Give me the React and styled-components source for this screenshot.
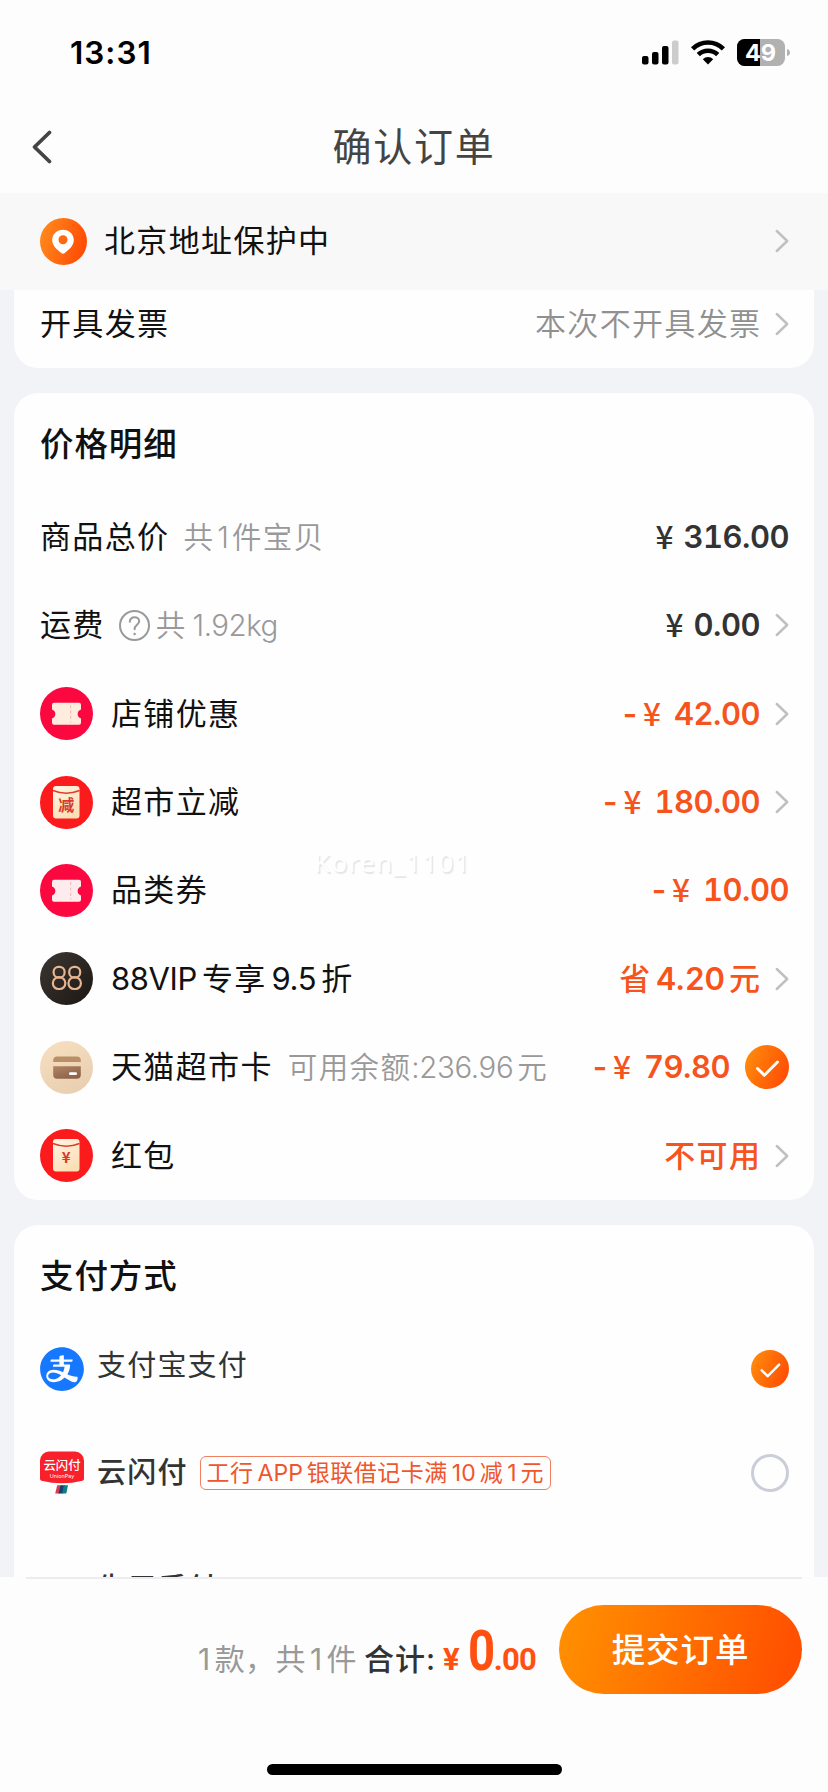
import React from "react";
import styled, { createGlobalStyle } from "styled-components";
import { AiFillAlipayCircle } from "react-icons/ai";

const GlobalStyle = createGlobalStyle`
  * { box-sizing: border-box; }
  body {
    margin: 0;
    background: #fdfdfd;
    font-family: Inter, "Noto Sans CJK SC", sans-serif;
    -webkit-font-smoothing: antialiased;
  }
`;

const Screen = styled.div`
  position: relative;
  width: 828px;
  height: 1792px;
  display: flex;
  flex-direction: column;
  overflow: hidden;
  background: #fdfdfd;
  white-space: nowrap;
`;

/* ---------- header ---------- */

const StatusBar = styled.div`
  height: 105px;
  flex: none;
  display: flex;
  align-items: center;
  justify-content: space-between;
  padding: 0 38px 0 70px;
`;

const Time = styled.span`
  font-size: 31.5px;
  font-weight: 600;
  color: #000;
  letter-spacing: 1px;
`;

const StatusIcons = styled.div`
  display: flex;
  align-items: center;
  gap: 12px;
`;

const NavBar = styled.div`
  height: 88px;
  flex: none;
  display: grid;
  grid-template-columns: 60px 1fr 60px;
  align-items: center;
  padding: 0 20px 4px;
`;

const BackButton = styled.button`
  display: flex;
  padding: 0 0 0 10px;
  border: 0;
  background: none;
`;

const NavTitle = styled.h1`
  margin: 0;
  text-align: center;
  font-size: 39px;
  line-height: 50px;
  font-weight: 400;
  letter-spacing: 1.8px;
  color: #444;
`;

const AddressBar = styled.div`
  height: 97px;
  flex: none;
  display: flex;
  align-items: center;
  gap: 17px;
  padding: 0 39px 1px 40px;
  background: #f8f8f8;
`;

/* ---------- cards ---------- */

const Content = styled.main`
  flex: 1;
  min-height: 0;
  overflow: hidden;
  display: flex;
  flex-direction: column;
  gap: 25px;
  padding: 0 14px;
  background: #f2f3f6;
`;

const Card = styled.section`
  flex: none;
  background: #fefefe;
  border-radius: ${(p) => (p.$joined ? "0 0 24px 24px" : "24px")};
  padding: 0 25px 0 26px;
`;

const CardTitle = styled.h2`
  margin: 0;
  height: 99.5px;
  display: flex;
  align-items: center;
  padding-bottom: 2px;
  font-size: 33.5px;
  font-weight: 500;
  letter-spacing: 0.9px;
  color: #111;
`;

const Row = styled.div`
  height: ${(p) => p.$height || 88.45}px;
  display: flex;
  align-items: center;
  padding-bottom: ${(p) => p.$lift || 0}px;
`;

const Label = styled.span`
  display: inline-flex;
  align-items: center;
  gap: 5px;
  font-size: 31px;
  line-height: 40px;
  letter-spacing: 1.35px;
  color: #111;
  margin-left: ${(p) => p.$left || 0}px;
`;

const Latin = styled.span`
  letter-spacing: ${(p) => p.$spacing || 0}px;
`;

const Note = styled.span`
  display: inline-flex;
  align-items: center;
  gap: ${(p) => p.$gap || 0}px;
  font-size: 29.5px;
  line-height: 40px;
  font-weight: 350;
  letter-spacing: 1.4px;
  color: #999;
  margin-left: ${(p) => p.$left || 0}px;
`;

const Trailing = styled.div`
  margin-left: auto;
  display: flex;
  align-items: center;
  gap: 15px;
`;

const Amount = styled.span`
  display: inline-flex;
  align-items: center;
  font-size: 31px;
  line-height: 40px;
  font-weight: 600;
  font-variant-numeric: tabular-nums;
  color: ${(p) => (p.$accent ? "#f6531d" : "#333")};
`;

const Minus = styled.span`
  margin-right: 3px;
`;

const Yen = styled.span`
  width: ${(p) => (p.$wide ? 31 : 28)}px;
  padding-bottom: 4px;
  font-family: "Noto Sans CJK SC", sans-serif;
  font-size: 31.5px;
  font-weight: 500;
`;

const Status = styled.span`
  display: inline-flex;
  align-items: center;
  gap: 4px;
  font-size: 31px;
  line-height: 40px;
  font-weight: 500;
  letter-spacing: 1.4px;
  margin-right: -1.4px;
  color: #f6531d;
`;

const StatusNumber = styled.span`
  font-weight: 600;
  letter-spacing: 0;
`;

const InvoiceValue = styled.span`
  font-size: 31px;
  line-height: 40px;
  letter-spacing: 1.35px;
  margin-right: -1.4px;
  font-weight: 350;
  color: #909090;
`;

const PayName = styled.span`
  font-size: 29px;
  line-height: 40px;
  letter-spacing: 1.2px;
  font-weight: ${(p) => p.$weight || 400};
  color: #333;
  margin-left: 13px;
  padding-bottom: ${(p) => p.$lift || 0}px;
`;

const PromoTag = styled.span`
  display: inline-flex;
  align-items: center;
  gap: 4px;
  height: 34px;
  margin-left: 12px;
  padding: 0 6px;
  border: 1px solid #f08060;
  border-radius: 6px;
  font-size: 23px;
  line-height: 30px;
  letter-spacing: 0.5px;
  color: #f0562c;
`;

const Radio = styled.span`
  width: 38px;
  height: 38px;
  border: 3px solid #cbced8;
  border-radius: 50%;
`;

const Watermark = styled.span`
  position: absolute;
  left: 314px;
  top: 845px;
  font-family: "Noto Sans", sans-serif;
  font-size: 26px;
  line-height: 34px;
  letter-spacing: 1.3px;
  color: #fff;
  text-shadow: 1.5px 1.5px 1px rgba(0, 0, 0, 0.1);
`;

/* ---------- footer ---------- */

const Footer = styled.footer`
  height: 215px;
  flex: none;
  display: flex;
  flex-direction: column;
  align-items: center;
  padding: 0 26px 17px;
  background: #fdfdfd;
`;

const FooterLine = styled.div`
  width: 100%;
  height: 2px;
  background: #ededef;
`;

const Summary = styled.div`
  width: 100%;
  display: flex;
  align-items: flex-start;
  justify-content: flex-end;
  padding-top: 26px;
`;

const Totals = styled.div`
  height: 89px;
  display: flex;
  align-items: baseline;
  padding-top: 16px;
  font-size: 30px;
  line-height: 60px;
`;

const Count = styled.span`
  display: inline-flex;
  align-items: baseline;
  gap: 4px;
  color: #999;
  letter-spacing: 0.4px;
  margin-right: 7px;
`;

const TotalLabel = styled.span`
  color: #333;
  font-weight: 500;
  letter-spacing: 1px;
  margin-right: 7px;
`;

const Price = styled.span`
  display: inline-flex;
  align-items: baseline;
  font-family: Roboto, sans-serif;
  font-weight: 700;
  color: #ff5011;
  margin-right: 23px;
`;

const PriceSmall = styled.span`
  font-size: 31px;
  letter-spacing: -0.8px;
`;

const PriceBig = styled.span`
  display: inline-block;
  width: 26px;
  margin: 0 0 0 9px;
  font-size: 55px;
  transform: scaleX(0.86);
  transform-origin: left;
`;

const SubmitButton = styled.button`
  width: 243px;
  height: 89px;
  padding: 0 0 4px;
  border: 0;
  border-radius: 45px;
  background: linear-gradient(105deg, #ff9200 0%, #ff7200 45%, #ff4b00 100%);
  color: #fff;
  font-family: inherit;
  font-size: 33.5px;
  font-weight: 500;
  letter-spacing: 0.9px;
`;

const HomeIndicator = styled.div`
  width: 295px;
  height: 11px;
  margin-top: auto;
  border-radius: 6px;
  background: #000;
`;

const Drawing = styled.svg`
  display: block;
  flex: none;
  overflow: visible;
`;

/* ---------- icons ---------- */

const Signal = () => (
  <Drawing width="37" height="25" viewBox="0 0 37 25">
    <rect x="0" y="16" width="6.5" height="8.5" rx="2" fill="#000" />
    <rect x="10" y="12" width="6.5" height="12.5" rx="2" fill="#000" />
    <rect x="20" y="6" width="6.5" height="18.5" rx="2" fill="#000" />
    <rect x="30" y="0.5" width="6.5" height="24" rx="2" fill="#ccc" />
  </Drawing>
);

const Wifi = () => (
  <Drawing width="34" height="25" viewBox="0 0 34 25" fill="none" stroke="#000" strokeWidth="4.6">
    <path d="M1.6 8.8A22 22 0 0 1 32.4 8.8" />
    <path d="M7.3 14.6A14 14 0 0 1 26.7 14.6" />
    <path d="M11.8 19.2A7.4 7.4 0 0 1 22.2 19.2L17 24.6Z" fill="#000" stroke="none" />
  </Drawing>
);

const Battery = () => (
  <Drawing width="53" height="27" viewBox="0 0 53 27">
    <defs>
      <clipPath id="batteryBody">
        <rect width="48" height="27" rx="7.5" />
      </clipPath>
    </defs>
    <g clipPath="url(#batteryBody)">
      <rect width="48" height="27" fill="#b1b1b1" />
      <rect width="23" height="27" fill="#000" />
    </g>
    <path d="M50 10q3 1 3 3.5t-3 3.5z" fill="#b1b1b1" />
    <text x="23.5" y="21.8" textAnchor="middle" fontFamily="Inter, sans-serif" fontSize="23.5" fontWeight="700" fill="#fff">
      49
    </text>
  </Drawing>
);

const BackArrow = () => (
  <Drawing width="22" height="34" viewBox="0 0 22 34">
    <path d="M19.5 2.5 4.5 17l15 14.5" fill="none" stroke="#444" strokeWidth="3.8" strokeLinecap="round" strokeLinejoin="round" />
  </Drawing>
);

const Chevron = () => (
  <Drawing width="14" height="24" viewBox="0 0 14 24">
    <path d="M1.8 2 12.2 12 1.8 22" fill="none" stroke="#c0c0c2" strokeWidth="2.5" strokeLinecap="round" strokeLinejoin="round" />
  </Drawing>
);

const Pin = () => (
  <Drawing width="47" height="47" viewBox="0 0 47 47">
    <defs>
      <linearGradient id="pinFill" x1="0" y1="0.3" x2="1" y2="0.6">
        <stop offset="0" stopColor="#ff8a1c" />
        <stop offset="1" stopColor="#ff4a05" />
      </linearGradient>
    </defs>
    <circle cx="23.5" cy="23.5" r="23.5" fill="url(#pinFill)" />
    <path d="M23 11.8c-6.200 0-10.800 4.600-10.800 10.300 0 5.600 4.400 9.100 9 12.900q1.800 1.400 3.600 0c4.600-3.800 9-7.300 9-12.900 0-5.700-4.600-10.300-10.800-10.300z" fill="#fff" />
    <circle cx="23" cy="21.800" r="4.500" fill="#ff6812" />
  </Drawing>
);

const Help = () => (
  <Drawing width="31" height="31" viewBox="0 0 31 31" fill="none" stroke="#999" strokeWidth="2" strokeLinecap="round">
    <circle cx="15.500" cy="15.500" r="14.500" />
    <path d="M10.800 11.800c.2-3 2.200-4.600 4.800-4.600s4.600 1.700 4.600 4.100c0 3.500-4.600 3.700-4.600 7.900" />
    <circle cx="15.500" cy="24" r=".8" fill="#999" strokeWidth="1" />
  </Drawing>
);

const Ticket = ({ tint }) => (
  <Drawing width="53" height="53" viewBox="0 0 53 53">
    <circle cx="26.500" cy="26.500" r="26.500" fill="#fb0840" />
    <path d="M14 15.700h25a2 2 0 0 1 2 2v4.800a4.700 4.700 0 0 0 0 9v4.300a2 2 0 0 1-2 2H14a2 2 0 0 1-2-2v-4.300a4.700 4.700 0 0 0 0-9v-4.800a2 2 0 0 1 2-2z" fill={tint} />
    <path d="M30.700 18v17.500" stroke="#f3b8b0" strokeWidth="1" strokeDasharray="3.200 2.200" />
  </Drawing>
);

const Envelope = ({ mark, size }) => (
  <Drawing width="53" height="53" viewBox="0 0 53 53">
    <defs>
      <linearGradient id="envelopeFill" x1="0" y1="0" x2="0.600" y2="1">
        <stop offset="0" stopColor="#fff6e6" />
        <stop offset="1" stopColor="#fbdfb4" />
      </linearGradient>
    </defs>
    <circle cx="26.500" cy="26.500" r="26.500" fill="#fb1a1c" />
    <rect x="13" y="10" width="26.500" height="32.500" rx="3" fill="url(#envelopeFill)" />
    <path d="M13 14.500q13.200 5.400 26.500 0" fill="none" stroke="#e23a2c" strokeWidth="1.600" />
    <text x="26.300" y={mark === "¥" ? 34.200 : 34.800} textAnchor="middle" fontFamily='"Noto Sans CJK SC", sans-serif' fontSize={size} fontWeight="700" fill="#d8392c">
      {mark}
    </text>
  </Drawing>
);

const Vip = () => (
  <Drawing width="53" height="53" viewBox="0 0 53 53">
    <defs>
      <linearGradient id="vipFill" x1="0" y1="0" x2="1" y2="1">
        <stop offset="0" stopColor="#3d3732" />
        <stop offset="1" stopColor="#1c1713" />
      </linearGradient>
    </defs>
    <circle cx="26.500" cy="26.500" r="26.500" fill="url(#vipFill)" />
    <g fill="none" stroke="#e6b591" strokeWidth="2.200">
      <rect x="13.600" y="14.800" width="11" height="10.600" rx="5" />
      <rect x="12.900" y="25.400" width="12.400" height="11.600" rx="5.600" />
      <rect x="29.200" y="14.800" width="11" height="10.600" rx="5" />
      <rect x="28.500" y="25.400" width="12.400" height="11.600" rx="5.600" />
    </g>
  </Drawing>
);

const MarketCard = () => (
  <Drawing width="53" height="53" viewBox="0 0 53 53">
    <defs>
      <linearGradient id="cardDisc" x1="0.200" y1="0" x2="0.700" y2="1">
        <stop offset="0" stopColor="#f6dfc0" />
        <stop offset="1" stopColor="#e9ceb0" />
      </linearGradient>
      <linearGradient id="cardFace" x1="0" y1="0" x2="0.600" y2="1">
        <stop offset="0" stopColor="#b08464" />
        <stop offset="1" stopColor="#8f634a" />
      </linearGradient>
    </defs>
    <circle cx="26.500" cy="26.500" r="26.500" fill="url(#cardDisc)" />
    <path d="M13.200 21v-1.600a4 4 0 0 1 4-4h19.600a4 4 0 0 1 4 4V21z" fill="#b98f67" />
    <path d="M13.200 25.200h27.600v8.600a4 4 0 0 1-4 4H17.200a4 4 0 0 1-4-4z" fill="url(#cardFace)" />
    <rect x="29" y="31.300" width="8" height="2.700" rx="1.300" fill="#fff" />
  </Drawing>
);

const Check = ({ id, size }) => (
  <Drawing width={size} height={size} viewBox="0 0 44 44">
    <defs>
      <linearGradient id={id} x1="0" y1="0.300" x2="1" y2="0.700">
        <stop offset="0" stopColor="#ff8a0c" />
        <stop offset="1" stopColor="#ff4c04" />
      </linearGradient>
    </defs>
    <circle cx="22" cy="22" r="22" fill={`url(#${id})`} />
    <path d="M12.500 23.500 19.300 30.200 32.500 17" fill="none" stroke="#fff" strokeWidth="2.900" strokeLinecap="round" strokeLinejoin="round" />
  </Drawing>
);

const AlipayMark = styled(AiFillAlipayCircle)`
  width: 50px;
  height: 50px;
  margin: 0 -3px;
  flex: none;
  color: #1677ff;
`;

const UnionPay = () => (
  <Drawing width="44" height="44" viewBox="0 0 44 44">
    <path d="M9 0.500h26a9 9 0 0 1 9 9v18.200q0 1.500-1.500 2Q32 32.300 22 32.300T1.500 29.700Q0 29.200 0 27.700V9.500a9 9 0 0 1 9-9z" fill="#f8202a" />
    <text x="22" y="19.200" textAnchor="middle" fontFamily='"Noto Sans CJK SC", sans-serif' fontSize="12.400" fontWeight="500" fill="#fff">
      云闪付
    </text>
    <text x="22" y="27" textAnchor="middle" fontFamily="Inter, sans-serif" fontSize="5.400" fill="#fff">
      UnionPay
    </text>
    <path d="M17.200 34.300h5l-2 8.200h-5z" fill="#d93a4c" />
    <path d="M20.500 34.300h4.500l-2 8.200h-4.500z" fill="#173f74" />
    <path d="M24 34.300h4L26.300 42.500H22z" fill="#0c7f86" />
  </Drawing>
);

/* ---------- page ---------- */

const Money = ({ value, accent, minus }) => (
  <Amount $accent={accent}>
    {minus && <Minus>-</Minus>}
    <Yen $wide={minus}>¥</Yen>
    <Latin $spacing={-0.5}>{value}</Latin>
  </Amount>
);

const discounts = [
  { icon: <Ticket tint="#ffece0" />, name: "店铺优惠", value: "42.00", link: true },
  { icon: <Envelope mark="减" size={16} />, name: "超市立减", value: "180.00", link: true },
  { icon: <Ticket tint="#fdebee" />, name: "品类券", value: "10.00", link: false },
];

export default function App() {
  return (
    <>
      <GlobalStyle />
      <Screen>
        <StatusBar>
          <Time>13:31</Time>
          <StatusIcons>
            <Signal />
            <Wifi />
            <Battery />
          </StatusIcons>
        </StatusBar>
        <NavBar>
          <BackButton aria-label="返回">
            <BackArrow />
          </BackButton>
          <NavTitle>确认订单</NavTitle>
        </NavBar>
        <AddressBar>
          <Pin />
          <Label>北京地址保护中</Label>
          <Trailing>
            <Chevron />
          </Trailing>
        </AddressBar>

        <Content>
          <Card $joined>
            <Row $height={78} $lift={10}>
              <Label>开具发票</Label>
              <Trailing>
                <InvoiceValue>本次不开具发票</InvoiceValue>
                <Chevron />
              </Trailing>
            </Row>
          </Card>

          <Card>
            <CardTitle>价格明细</CardTitle>
            <Row>
              <Label>商品总价</Label>
              <Note $left={14} $gap={3}>
                共<Latin>1</Latin>件宝贝
              </Note>
              <Trailing>
                <Money value="316.00" />
              </Trailing>
            </Row>
            <Row>
              <Label>运费</Label>
              <Note $left={14} $gap={6}>
                <Help />共<Latin $spacing={-0.5}>1.92kg</Latin>
              </Note>
              <Trailing>
                <Money value="0.00" />
                <Chevron />
              </Trailing>
            </Row>
            {discounts.map((item) => (
              <Row key={item.name}>
                {item.icon}
                <Label $left={18}>{item.name}</Label>
                <Trailing>
                  <Money value={item.value} accent minus />
                  {item.link && <Chevron />}
                </Trailing>
              </Row>
            ))}
            <Row>
              <Vip />
              <Label $left={18}>
                <Latin $spacing={-0.4}>88VIP</Latin>专享<Latin $spacing={-0.4}>9.5</Latin>折
              </Label>
              <Trailing>
                <Status>
                  省<StatusNumber>4.20</StatusNumber>元
                </Status>
                <Chevron />
              </Trailing>
            </Row>
            <Row>
              <MarketCard />
              <Label $left={18}>天猫超市卡</Label>
              <Note $left={15} $gap={4}>
                <span>
                  可用余额<Latin $spacing={-0.4}>:236.96</Latin>
                </span>
                元
              </Note>
              <Trailing>
                <Money value="79.80" accent minus />
                <Check id="cardCheck" size={44} />
              </Trailing>
            </Row>
            <Row>
              <Envelope mark="¥" size={15} />
              <Label $left={18}>红包</Label>
              <Trailing>
                <Status>不可用</Status>
                <Chevron />
              </Trailing>
            </Row>
          </Card>

          <Card>
            <CardTitle>支付方式</CardTitle>
            <Row $height={88}>
              <AlipayMark />
              <PayName $lift={6}>支付宝支付</PayName>
              <Trailing>
                <Check id="payCheck" size={38} />
              </Trailing>
            </Row>
            <Row $height={121}>
              <UnionPay />
              <PayName $weight={500}>云闪付</PayName>
              <PromoTag>
                工行<Latin>APP</Latin>银联借记卡满<Latin>10</Latin>减<Latin>1</Latin>元
              </PromoTag>
              <Trailing>
                <Radio />
              </Trailing>
            </Row>
            <Row $height={111}>
              <Label $left={44} />
              <PayName $weight={500}>先用后付</PayName>
            </Row>
          </Card>
        </Content>

        <Footer>
          <FooterLine />
          <Summary>
            <Totals>
              <Count>
                <span>1</span>
                <span>款，共</span>
                <span>1</span>
                <span>件</span>
              </Count>
              <TotalLabel>合计:</TotalLabel>
              <Price>
                <PriceSmall>¥</PriceSmall>
                <PriceBig>0</PriceBig>
                <PriceSmall>.00</PriceSmall>
              </Price>
            </Totals>
            <SubmitButton>提交订单</SubmitButton>
          </Summary>
          <HomeIndicator />
        </Footer>
        <Watermark>Koren_1101</Watermark>
      </Screen>
    </>
  );
}
